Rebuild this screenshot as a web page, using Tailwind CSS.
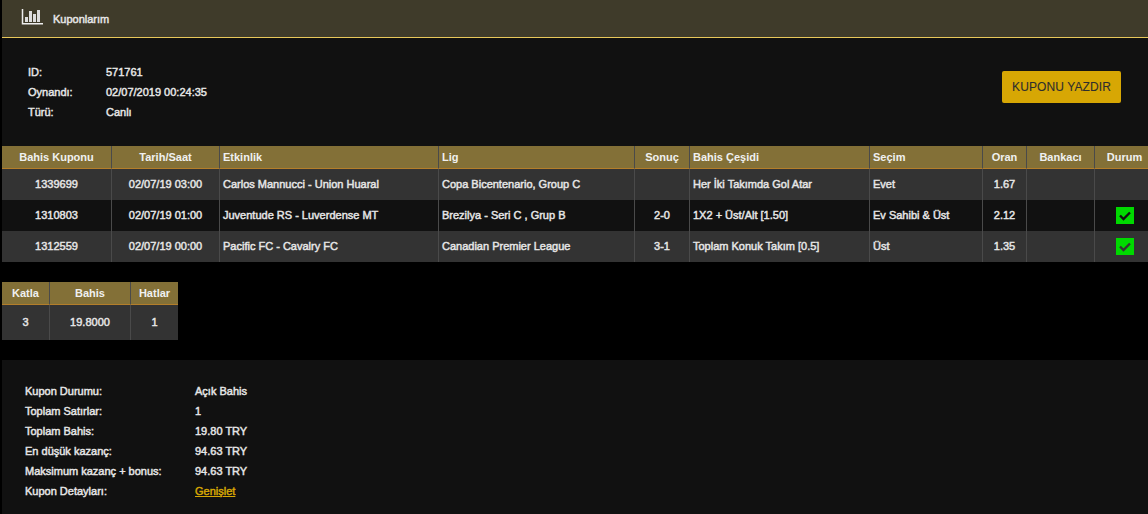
<!DOCTYPE html>
<html lang="tr">
  <head>
    <meta charset="UTF-8" />
    <title>Kuponlarım</title>
    <script src="https://cdn.jsdelivr.net/npm/@tailwindcss/browser@4"></script>
  </head>
  <body class="bg-black h-[514px] overflow-hidden pl-[2px] font-['Liberation_Sans',Arial,sans-serif] text-[11px] font-normal [-webkit-text-stroke:0.45px] text-[#e6e6e6]">
    <!-- Baslik -->
    <header class="h-[38px] bg-[#3f3b2a] border-b border-[#e8c85a] flex items-center pl-[19px]">
      <svg class="w-[22px] h-[17px] mb-[4px]" viewBox="0 0 22 17" fill="none">
        <path d="M1.5 1V15.7H22" stroke="#eeeeee" stroke-width="1.5" />
        <path d="M4 14V9H7V14ZM8 14V3H11V14ZM12 14V6H15V14ZM16 14V2H19V14Z" fill="#dddddd" />
      </svg>
      <span class="ml-[10px] mt-[2px]">Kuponlarım</span>
    </header>

    <!-- Kupon bilgisi -->
    <section class="h-[108px] bg-[#111111] flex justify-between pl-[26px] pr-[27px] pt-[24px]">
      <dl class="grid grid-cols-[78px_1fr] auto-rows-[20px] items-center">
        <dt>ID:</dt><dd>571761</dd>
        <dt>Oynandı:</dt><dd>02/07/2019 00:24:35</dd>
        <dt>Türü:</dt><dd>Canlı</dd>
      </dl>
      <button class="w-[119px] h-[32px] mt-[9px] bg-[#d7a704] rounded-[2px] text-[#2e2e2e] text-[12px] [-webkit-text-stroke:0.1px] tracking-[0.1px]">KUPONU YAZDIR</button>
    </section>

    <!-- Bahisler -->
    <table class="w-[1146px] table-fixed border-separate border-spacing-0">
      <colgroup>
        <col class="w-[110px]" /><col class="w-[108px]" /><col class="w-[219px]" /><col class="w-[196px]" /><col class="w-[55px]" /><col class="w-[180px]" /><col class="w-[113px]" /><col class="w-[44px]" /><col class="w-[68px]" /><col class="w-[53px]" />
      </colgroup>
      <thead>
        <tr class="h-[23px] bg-[#837037] text-[#f0f0f0]">
          <th class="border-r border-b border-r-[#4a4a4a] border-b-[#b47e2a] font-bold [-webkit-text-stroke:0] text-center">Bahis Kuponu</th>
          <th class="border-r border-b border-r-[#4a4a4a] border-b-[#b47e2a] font-bold [-webkit-text-stroke:0] text-center">Tarih/Saat</th>
          <th class="border-r border-b border-r-[#4a4a4a] border-b-[#b47e2a] font-bold [-webkit-text-stroke:0] text-left pl-[3px]">Etkinlik</th>
          <th class="border-r border-b border-r-[#4a4a4a] border-b-[#b47e2a] font-bold [-webkit-text-stroke:0] text-left pl-[3px]">Lig</th>
          <th class="border-r border-b border-r-[#4a4a4a] border-b-[#b47e2a] font-bold [-webkit-text-stroke:0] text-center">Sonuç</th>
          <th class="border-r border-b border-r-[#4a4a4a] border-b-[#b47e2a] font-bold [-webkit-text-stroke:0] text-left pl-[3px]">Bahis Çeşidi</th>
          <th class="border-r border-b border-r-[#4a4a4a] border-b-[#b47e2a] font-bold [-webkit-text-stroke:0] text-left pl-[3px]">Seçim</th>
          <th class="border-r border-b border-r-[#4a4a4a] border-b-[#b47e2a] font-bold [-webkit-text-stroke:0] text-center">Oran</th>
          <th class="border-r border-b border-r-[#4a4a4a] border-b-[#b47e2a] font-bold [-webkit-text-stroke:0] text-center">Bankacı</th>
          <th class="border-b border-b-[#b47e2a] font-bold [-webkit-text-stroke:0] text-center pl-[6px]">Durum</th>
        </tr>
      </thead>
      <tbody>
        <tr class="h-[31px] bg-[#333333]">
          <td class="border-r border-[#4a4a4a] text-center">1339699</td>
          <td class="border-r border-[#4a4a4a] text-center">02/07/19 03:00</td>
          <td class="border-r border-[#4a4a4a] pl-[3px]">Carlos Mannucci - Union Huaral</td>
          <td class="border-r border-[#4a4a4a] pl-[3px]">Copa Bicentenario, Group C</td>
          <td class="border-r border-[#4a4a4a] text-center"></td>
          <td class="border-r border-[#4a4a4a] pl-[3px]">Her İki Takımda Gol Atar</td>
          <td class="border-r border-[#4a4a4a] pl-[3px]">Evet</td>
          <td class="border-r border-[#4a4a4a] text-center">1.67</td>
          <td class="border-r border-[#4a4a4a]"></td>
          <td></td>
        </tr>
        <tr class="h-[31px] bg-[#111111]">
          <td class="border-r border-[#4a4a4a] text-center">1310803</td>
          <td class="border-r border-[#4a4a4a] text-center">02/07/19 01:00</td>
          <td class="border-r border-[#4a4a4a] pl-[3px]">Juventude RS - Luverdense MT</td>
          <td class="border-r border-[#4a4a4a] pl-[3px]">Brezilya - Seri C , Grup B</td>
          <td class="border-r border-[#4a4a4a] text-center">2-0</td>
          <td class="border-r border-[#4a4a4a] pl-[3px]">1X2 + Üst/Alt [1.50]</td>
          <td class="border-r border-[#4a4a4a] pl-[3px]">Ev Sahibi &amp; Üst</td>
          <td class="border-r border-[#4a4a4a] text-center">2.12</td>
          <td class="border-r border-[#4a4a4a]"></td>
          <td class="pl-[6px]">
            <svg class="w-[18px] h-[17px] mx-auto" viewBox="0 0 18 17"><rect width="18" height="17" fill="#00d900" /><path d="M4 8.5L7.5 12L14 5.5" fill="none" stroke="#111111" stroke-width="2.4" /></svg>
          </td>
        </tr>
        <tr class="h-[31px] bg-[#333333]">
          <td class="border-r border-[#4a4a4a] text-center">1312559</td>
          <td class="border-r border-[#4a4a4a] text-center">02/07/19 00:00</td>
          <td class="border-r border-[#4a4a4a] pl-[3px]">Pacific FC - Cavalry FC</td>
          <td class="border-r border-[#4a4a4a] pl-[3px]">Canadian Premier League</td>
          <td class="border-r border-[#4a4a4a] text-center">3-1</td>
          <td class="border-r border-[#4a4a4a] pl-[3px]">Toplam Konuk Takım [0.5]</td>
          <td class="border-r border-[#4a4a4a] pl-[3px]">Üst</td>
          <td class="border-r border-[#4a4a4a] text-center">1.35</td>
          <td class="border-r border-[#4a4a4a]"></td>
          <td class="pl-[6px]">
            <svg class="w-[18px] h-[17px] mx-auto" viewBox="0 0 18 17"><rect width="18" height="17" fill="#00d900" /><path d="M4 8.5L7.5 12L14 5.5" fill="none" stroke="#333333" stroke-width="2.4" /></svg>
          </td>
        </tr>
      </tbody>
    </table>

    <!-- Katla -->
    <table class="w-[176px] mt-[20px] table-fixed border-separate border-spacing-0">
      <colgroup><col class="w-[48px]" /><col class="w-[81px]" /><col class="w-[47px]" /></colgroup>
      <thead>
        <tr class="h-[23px] bg-[#837037] text-[#f0f0f0]">
          <th class="border-r border-b border-r-[#4a4a4a] border-b-[#b47e2a] font-bold [-webkit-text-stroke:0]">Katla</th>
          <th class="border-r border-b border-r-[#4a4a4a] border-b-[#b47e2a] font-bold [-webkit-text-stroke:0]">Bahis</th>
          <th class="border-b border-b-[#b47e2a] font-bold [-webkit-text-stroke:0]">Hatlar</th>
        </tr>
      </thead>
      <tbody>
        <tr class="h-[35px] bg-[#333333] text-center">
          <td class="border-r border-[#4a4a4a]">3</td>
          <td class="border-r border-[#4a4a4a]">19.8000</td>
          <td>1</td>
        </tr>
      </tbody>
    </table>

    <!-- Ozet -->
    <section class="mt-[20px] h-[154px] bg-[#111111] pl-[23px] pt-[21px]">
      <dl class="grid grid-cols-[170px_1fr] auto-rows-[20px] items-center">
        <dt>Kupon Durumu:</dt><dd>Açık Bahis</dd>
        <dt>Toplam Satırlar:</dt><dd>1</dd>
        <dt>Toplam Bahis:</dt><dd>19.80 TRY</dd>
        <dt>En düşük kazanç:</dt><dd>94.63 TRY</dd>
        <dt>Maksimum kazanç + bonus:</dt><dd>94.63 TRY</dd>
        <dt>Kupon Detayları:</dt><dd><a href="#" class="text-[#d7a704] underline">Genişlet</a></dd>
      </dl>
    </section>
  </body>
</html>
